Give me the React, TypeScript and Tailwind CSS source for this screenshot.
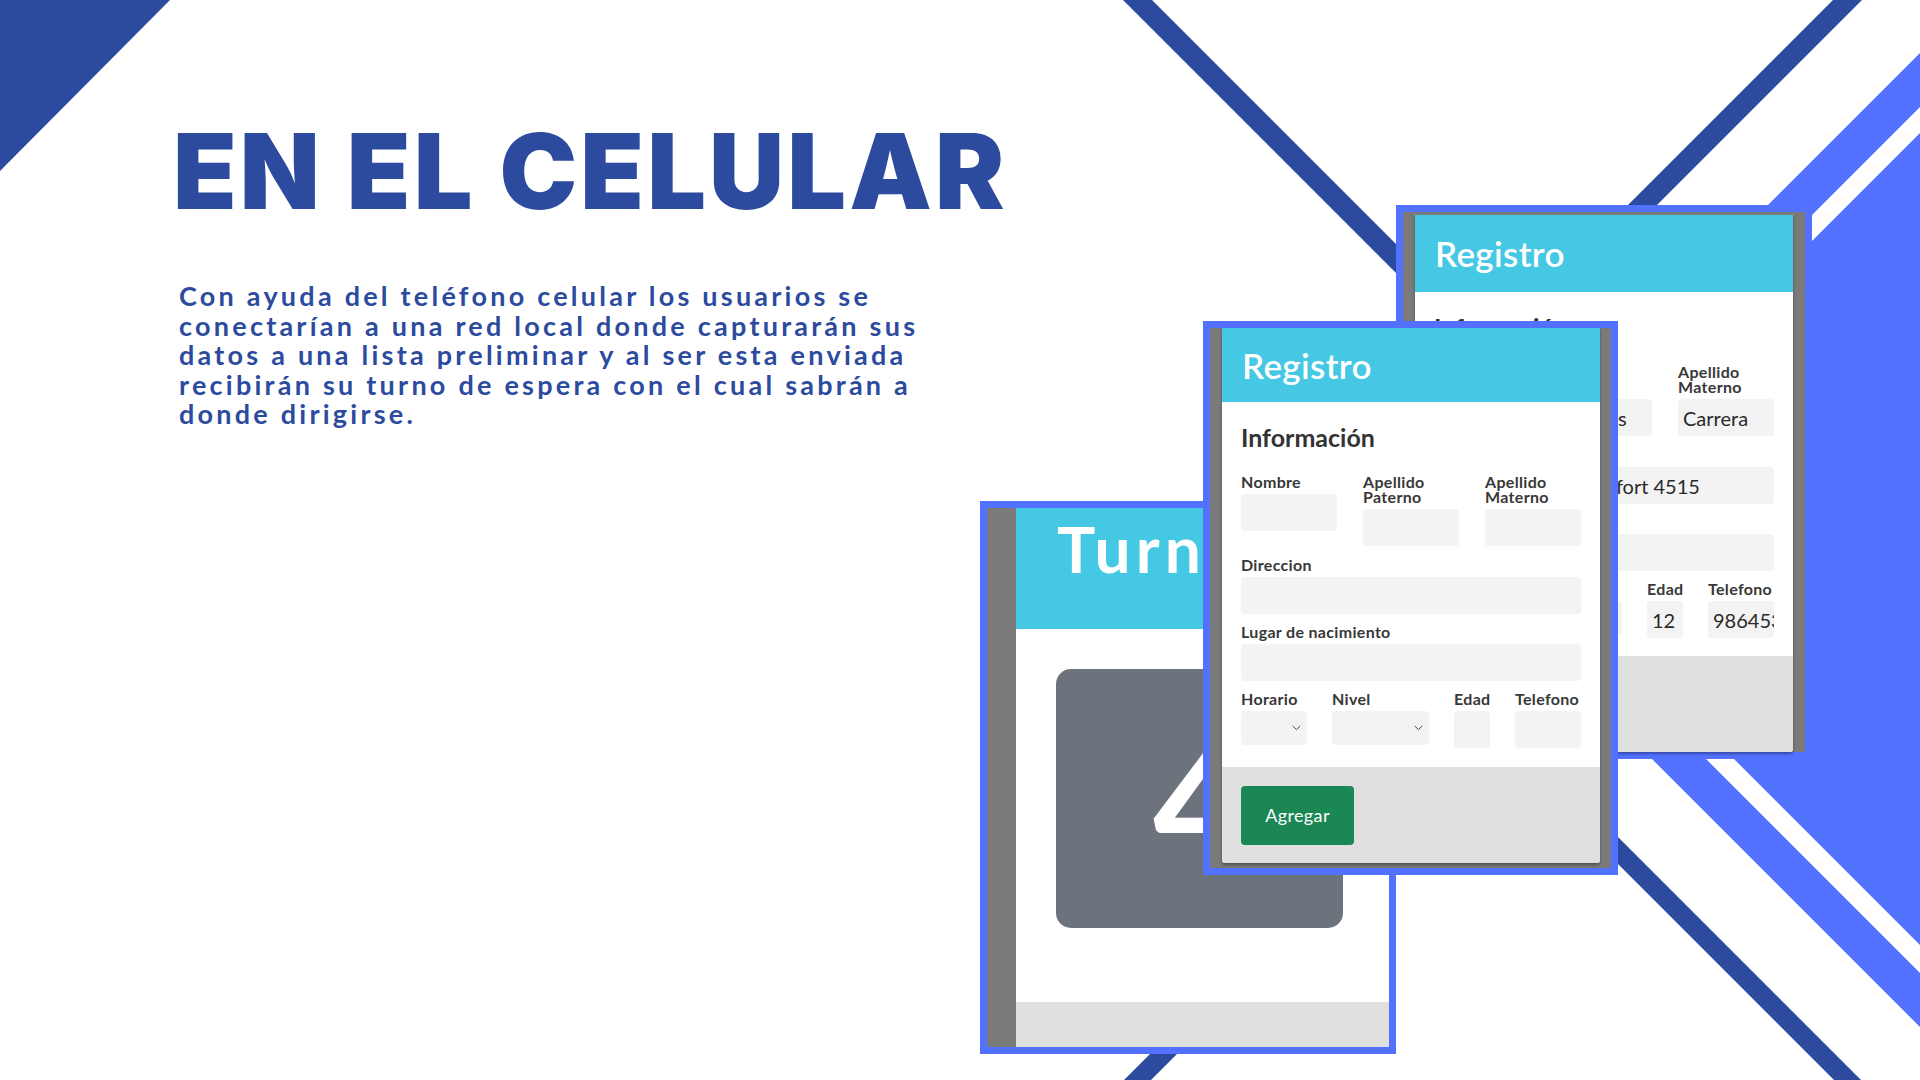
import React from 'react';

const DARK = '#2C4B9E';
const BRIGHT = '#5271FF';

type Values = {
  nombre?: string;
  paterno?: string;
  materno?: string;
  direccion?: string;
  lugar?: string;
  edad?: string;
  telefono?: string;
};

const Chevron = () => (
  <svg width="9" height="6" viewBox="0 0 9 6" fill="none" className="shrink-0">
    <path d="M1 1.2 4.5 4.6 8 1.2" stroke="#444" strokeWidth="1" strokeLinecap="round" strokeLinejoin="round" />
  </svg>
);

const Field = ({ label, value }: { label: React.ReactNode; value?: string }) => (
  <div className="flex min-w-0 flex-col">
    <span className="text-[16px] leading-[15px] font-bold tracking-[0.02em] text-[#383838]">{label}</span>
    <div className="mt-[5px] flex h-[37px] items-center overflow-hidden whitespace-nowrap rounded-[4px] bg-[#F3F3F3] pl-[5px] text-[20px] text-[#2a2a2a]">
      {value}
    </div>
  </div>
);

const SelectField = ({ label }: { label: string }) => (
  <div className="flex min-w-0 flex-col">
    <span className="text-[16px] leading-[15px] font-bold tracking-[0.02em] text-[#383838]">{label}</span>
    <div className="mt-[5px] flex h-[34px] items-center justify-end rounded-[4px] bg-[#F3F3F3] pr-[6px]">
      <Chevron />
    </div>
  </div>
);

// phone screenshot of the "Registro" form
const RegistroForm = ({ values, headerClass }: { values?: Values; headerClass: string }) => (
  <div className="flex h-full flex-col overflow-hidden rounded-b-[3px] bg-white shadow-[0_2px_3px_rgba(0,0,0,0.35)]">
    <div className={headerClass}>
      <span className="text-[35px] leading-none font-semibold tracking-[0.01em] text-white">Registro</span>
    </div>

    <div className="flex flex-1 flex-col px-[19px] pt-5">
      <h3 className="text-[25px] leading-[30px] font-bold text-[#333]">Información</h3>

      <div className="mt-[22px] grid grid-cols-3 gap-x-[26px]">
        <Field label="Nombre" value={values?.nombre} />
        <Field label={<>Apellido<br />Paterno</>} value={values?.paterno} />
        <Field label={<>Apellido<br />Materno</>} value={values?.materno} />
      </div>

      <div className="mt-[11px]">
        <Field label="Direccion" value={values?.direccion} />
      </div>
      <div className="mt-[10px]">
        <Field label="Lugar de nacimiento" value={values?.lugar} />
      </div>

      <div className="mt-[10px] grid grid-cols-[66px_97px_36px_66px] gap-x-[25px]">
        <SelectField label="Horario" />
        <SelectField label="Nivel" />
        <Field label="Edad" value={values?.edad} />
        <Field label="Telefono" value={values?.telefono} />
      </div>
    </div>

    <div className="h-[96px] shrink-0 bg-[#E0E0E0] px-[19px] pt-[19px]">
      <button type="button" className="h-[59px] w-[113px] rounded-[4px] bg-[#1A8754] text-[18px] tracking-[0.02em] text-white">
        Agregar
      </button>
    </div>
  </div>
);

const Background = () => (
  <svg className="absolute inset-0" width="1920" height="1080" viewBox="0 0 1920 1080">
    {/* dark corner + stripes */}
    <polygon points="0,0 170,0 0,171" fill={DARK} />
    <polygon points="1123,0 1152,0 1552,400 1523,400" fill={DARK} />
    <polygon points="1833,0 1862,0 1562,300 1533,300" fill={DARK} />
    <polygon points="1454,700 1481,700 1861,1080 1834,1080" fill={DARK} />
    <polygon points="1204,1000 1231,1000 1151,1080 1124,1080" fill={DARK} />
    {/* bright blue block and stripes */}
    <polygon points="1920,53 1920,107 1700,327 1700,273" fill={BRIGHT} />
    <polygon points="1920,133 1700,353 1700,725 1920,945" fill={BRIGHT} />
    <polygon points="1593,700 1647,700 1920,973 1920,1027" fill={BRIGHT} />
  </svg>
);

export default function App() {
  return (
    <div className="relative h-[1080px] w-[1920px] overflow-hidden bg-white font-['Lato',_'Noto_Sans',_sans-serif]">
      <Background />

      {/* Left text column */}
      <div className="relative flex flex-col pl-[179px] pt-[119px]" style={{ color: DARK }}>
        <h1 className="-ml-[6px] font-['Inter',_'Liberation_Sans',_sans-serif] text-[104px] leading-none font-black tracking-[0.03em]">
          EN EL CELULAR
        </h1>
        <p className="mt-[58px] flex flex-col text-[27px] leading-[29.5px] font-bold tracking-[0.12em]">
          <span>Con ayuda del teléfono celular los usuarios se</span>
          <span>conectarían a una red local donde capturarán sus</span>
          <span>datos a una lista preliminar y al ser esta enviada</span>
          <span>recibirán su turno de espera con el cual sabrán a</span>
          <span>donde dirigirse.</span>
        </p>
      </div>

      {/* Turno screenshot */}
      <div className="absolute left-[980px] top-[501px] flex h-[553px] w-[416px] border-[7px] border-[#5271FF] bg-[#7A7A7A] pl-[29px]">
        <div className="flex flex-1 flex-col bg-white">
          <div className="h-[121px] shrink-0 bg-[#45C8E3] pl-[41px] pt-[9px]">
            <span className="text-[64px] leading-none font-bold tracking-[0.08em] text-white">Turno</span>
          </div>
          <div className="flex-1 pl-10 pt-10">
            <div className="flex h-[259px] w-[287px] items-center justify-center rounded-[15px] bg-[#6C737C]">
              <span className="text-[160px] leading-none font-bold text-white">4</span>
            </div>
          </div>
          <div className="h-[45px] shrink-0 bg-[#E0E0E0]" />
        </div>
      </div>

      {/* Registro screenshot, filled */}
      <div className="absolute left-[1396px] top-[205px] h-[554px] w-[416px] border-[7px] border-[#5271FF] bg-[#7A7A7A] px-[12px] pt-[3px]">
        <RegistroForm
          headerClass="flex h-[77px] shrink-0 items-center bg-[#45C8E3] px-5"
          values={{
            nombre: 'Juan',
            paterno: 'Rosales',
            materno: 'Carrera',
            direccion: 'Calle Los Pinos Comfort 4515',
            edad: '12',
            telefono: '9864531234',
          }}
        />
      </div>

      {/* Registro screenshot, empty */}
      <div className="absolute left-[1203px] top-[321px] h-[554px] w-[415px] border-[7px] border-[#5271FF] bg-[#7A7A7A] pb-[5px] pl-[12px] pr-[11px]">
        <RegistroForm headerClass="flex h-[74px] shrink-0 items-center bg-[#45C8E3] px-5" />
      </div>
    </div>
  );
}
